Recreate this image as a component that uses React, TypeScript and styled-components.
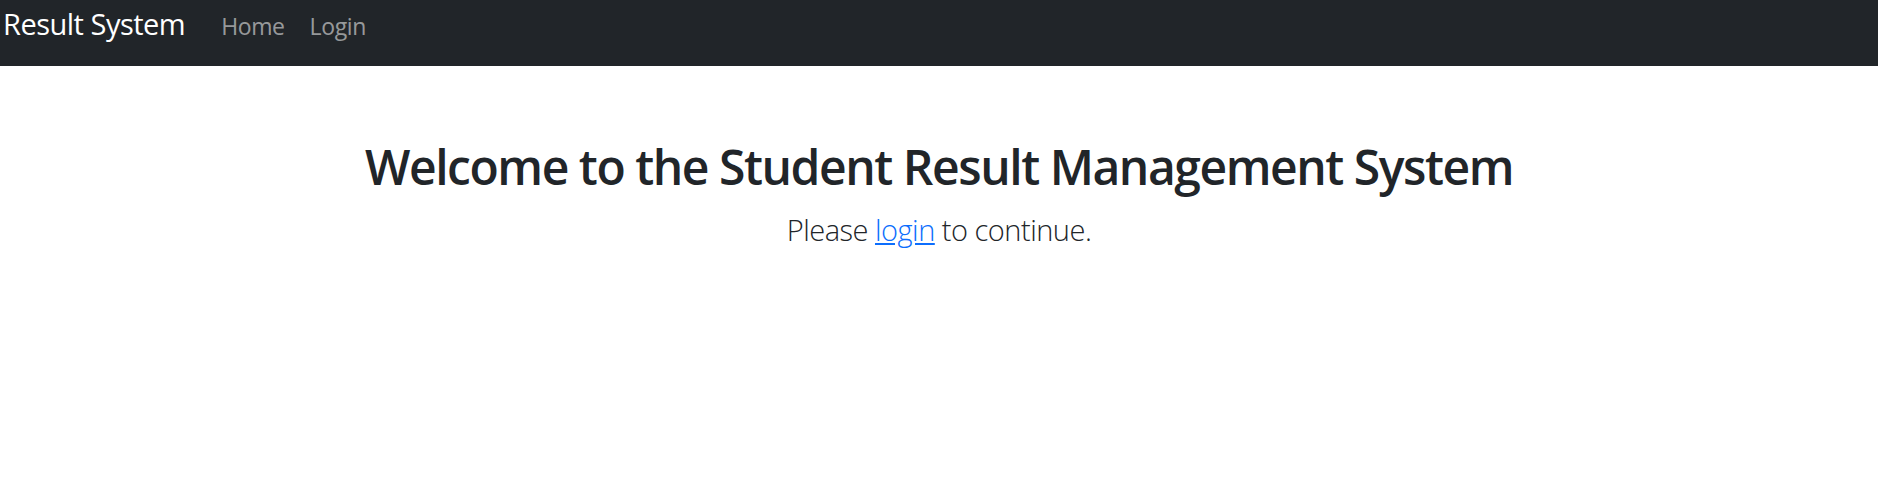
import React from "react";
import styled, { createGlobalStyle } from "styled-components";

const Global = createGlobalStyle`
  html, body { margin: 0; padding: 0; background: #fff; }
  body { font-family: "Open Sans", "Noto Sans", sans-serif; color: #212529; }
`;

const Navbar = styled.nav`
  height: 66px;
  box-sizing: border-box;
  background: #212529;
  display: flex;
  align-items: baseline;
  padding: 1px 0 0 3px;
`;

const Brand = styled.a`
  font-size: 29px;
  letter-spacing: -0.5px;
  color: #fff;
  text-decoration: none;
  margin-right: 36px;
  line-height: 45px;
`;

const NavList = styled.div`
  display: flex;
  align-items: baseline;
  gap: 25px;
`;

const NavLink = styled.a`
  font-size: 23px;
  letter-spacing: -0.4px;
  color: rgba(255, 255, 255, 0.55);
  text-decoration: none;
  line-height: 36px;
`;

const Main = styled.main`
  padding-top: 72px;
  text-align: center;
`;

const Title = styled.h1`
  margin: 0 0 12px;
  font-size: 48px;
  font-weight: 600;
  letter-spacing: -1.45px;
  line-height: 1.2;
`;

const Lead = styled.p`
  margin: 0;
  font-size: 29px;
  font-weight: 300;
  letter-spacing: -0.5px;
  line-height: 1.5;
`;

const Link = styled.a`
  color: #0d6efd;
  text-decoration: underline;
`;

export default function App() {
  return (
    <>
      <Global />
      <Navbar>
        <Brand href="#">Result System</Brand>
        <NavList>
          <NavLink href="#">Home</NavLink>
          <NavLink href="#">Login</NavLink>
        </NavList>
      </Navbar>
      <Main>
        <Title>Welcome to the Student Result Management System</Title>
        <Lead>
          Please <Link href="#">login</Link> to continue.
        </Lead>
      </Main>
    </>
  );
}
